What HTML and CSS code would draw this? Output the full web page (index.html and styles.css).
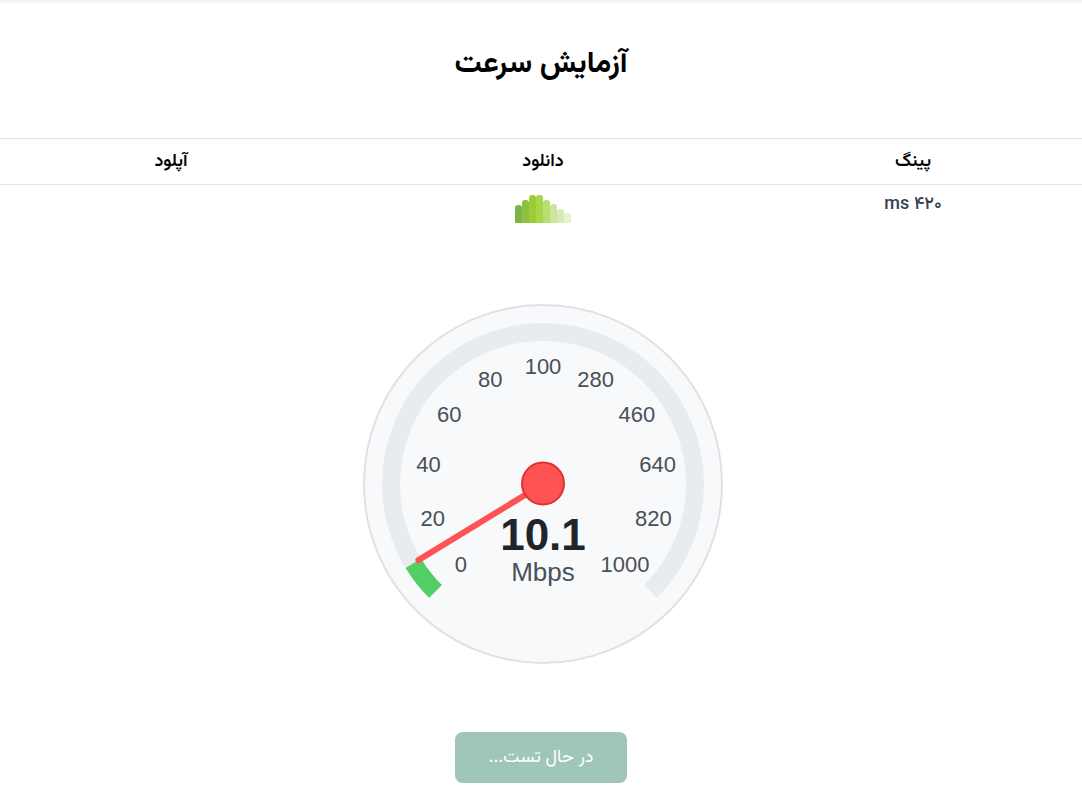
FILE: index.html
```html
<!DOCTYPE html>
<html lang="fa" dir="rtl">
<head>
<meta charset="utf-8">
<title>آزمایش سرعت</title>
<link rel="stylesheet" href="styles.css">
</head>
<body>
<div class="topbar"></div>
<main class="page">
  <h1 class="title">آزمایش سرعت</h1>
  <div class="results">
    <div class="row head">
      <div class="cell">پینگ</div>
      <div class="cell">دانلود</div>
      <div class="cell">آپلود</div>
    </div>
    <div class="row data">
      <div class="cell value">۴۲۰ ms</div>
      <div class="cell">
        <div class="bars">
          <span class="bar b1"></span>
          <span class="bar b2"></span>
          <span class="bar b3"></span>
          <span class="bar b4"></span>
          <span class="bar b5"></span>
          <span class="bar b6"></span>
          <span class="bar b7"></span>
          <span class="bar b8"></span>
        </div>
      </div>
      <div class="cell value"></div>
    </div>
  </div>
  <div class="gauge-wrap">
    <svg class="gauge" width="364" height="364" viewBox="0 0 364 364" direction="ltr">
      <circle cx="182" cy="182" r="179" fill="#f8f9fa" stroke="#dee2e6" stroke-width="2"/>
      <path d="M 74.52 289.48 A 152 152 0 1 1 289.48 289.48" fill="none" stroke="#e9ecef" stroke-width="18"/>
      <path d="M 74.52 289.48 A 152 152 0 0 1 52.27 261.19" fill="none" stroke="#51cf66" stroke-width="18"/>
      <g class="ticks" text-anchor="middle">
        <text x="99.98" y="270">0</text>
        <text x="71.67" y="223.8">20</text>
        <text x="67.43" y="169.9">40</text>
        <text x="88.16" y="119.8">60</text>
        <text x="129.34" y="84.6">80</text>
        <text x="182" y="72">100</text>
        <text x="234.66" y="84.6">280</text>
        <text x="275.84" y="119.8">460</text>
        <text x="296.57" y="169.9">640</text>
        <text x="292.33" y="223.8">820</text>
        <text x="264.02" y="270">1000</text>
      </g>
      <line x1="182" y1="182" x2="57.4" y2="258.1" stroke="#ff5252" stroke-width="6" stroke-linecap="round"/>
      <circle cx="182" cy="181.5" r="21" fill="#ff5252" stroke="#e03131" stroke-width="2"/>
      <text class="speed" x="182" y="248" text-anchor="middle">10.1</text>
      <text class="unit" x="182" y="279" text-anchor="middle">Mbps</text>
    </svg>
  </div>
  <div class="actions">
    <button class="btn" disabled>در حال تست...</button>
  </div>
</main>
</body>
</html>
```
FILE: styles.css
```css
html, body {
  margin: 0;
  padding: 0;
  background: #ffffff;
}
body {
  font-family: "Vazirmatn", "Noto Sans Arabic", "DejaVu Sans", sans-serif;
  color: #000;
}
.topbar {
  height: 4px;
  background: linear-gradient(#ececec, #ffffff);
}
.page {
  display: flex;
  flex-direction: column;
  padding-top: 41px;
}
.title {
  margin: 0;
  text-align: center;
  font-size: 30px;
  line-height: 40px;
  font-weight: 700;
}
.results {
  margin-top: 53px;
  border-top: 1px solid #e3e3e3;
}
.row {
  display: grid;
  grid-template-columns: 338fr 402fr 342fr;
}
.row.head {
  height: 45px;
  align-items: center;
  border-bottom: 1px solid #e3e3e3;
}
.row.head .cell {
  text-align: center;
  font-size: 18px;
  font-weight: 600;
}
.row.data .cell {
  padding-top: 8px;
  text-align: center;
  font-size: 18px;
  line-height: 24px;
}
.value {
  color: #374151;
  font-weight: 500;
}
.bars {
  display: flex;
  justify-content: center;
  align-items: flex-end;
  direction: ltr;
  height: 30px;
}
.bar {
  width: 7px;
  border-radius: 3px 3px 0 0;
}
.b1 { height: 18px; background: #7cb548; }
.b2 { height: 23px; background: #8cc240; }
.b3 { height: 28px; background: #9bcd38; }
.b4 { height: 28px; background: #a7d64a; }
.b5 { height: 23px; background: #b8de72; }
.b6 { height: 19px; background: #c9e699; }
.b7 { height: 14px; background: #d7ecb4; }
.b8 { height: 10px; background: #e6f3cf; }
.gauge-wrap {
  display: flex;
  justify-content: center;
  margin-top: 79px;
  padding-left: 4px;
}
.gauge {
  display: block;
}
.ticks text {
  font-family: "Liberation Sans", Arial, sans-serif;
  font-size: 22px;
  fill: #495057;
}
.speed {
  font-family: "Liberation Sans", Arial, sans-serif;
  font-size: 44px;
  font-weight: 700;
  fill: #212529;
}
.unit {
  font-family: "Liberation Sans", Arial, sans-serif;
  font-size: 26px;
  fill: #495057;
}
.actions {
  display: flex;
  justify-content: center;
  margin-top: 66px;
}
.btn {
  width: 172px;
  height: 51px;
  border: none;
  border-radius: 8px;
  background: #a0c6bc;
  color: #ffffff;
  font-family: inherit;
  font-size: 18px;
  box-shadow: 0 1px 2px rgba(0, 0, 0, 0.06);
}
```
